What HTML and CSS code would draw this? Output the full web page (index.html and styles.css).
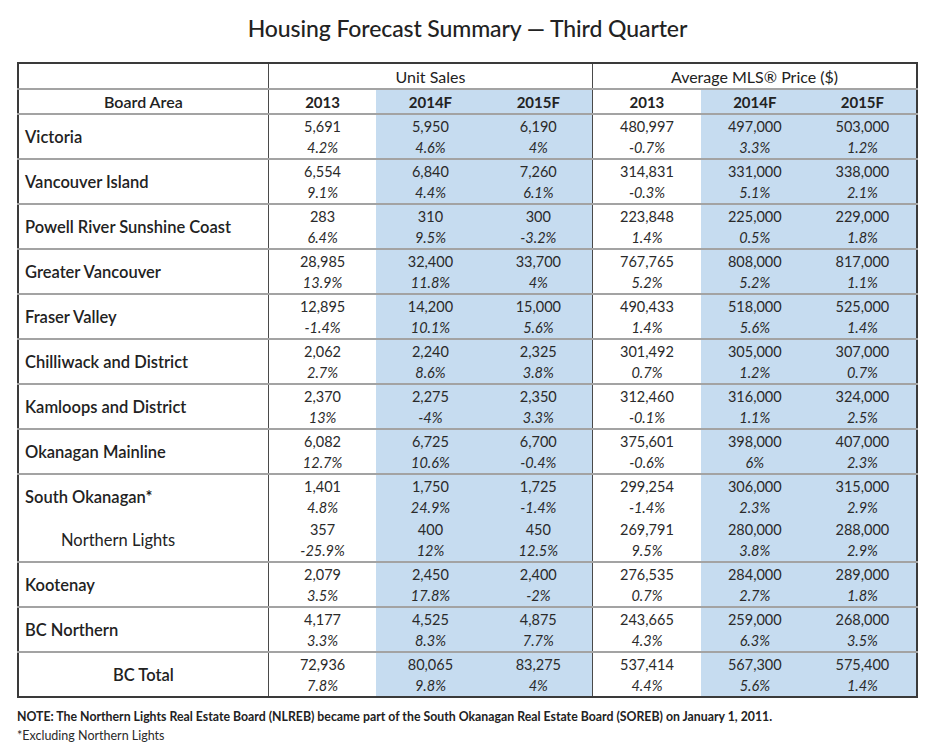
FILE: index.html
```html
<!DOCTYPE html>
<html lang="en">
<head>
<meta charset="utf-8">
<title>Housing Forecast Summary — Third Quarter</title>
<link rel="stylesheet" href="styles.css">
</head>
<body>
<div class="page">
  <h1 class="title">Housing Forecast Summary — Third Quarter</h1>
  <table class="forecast">
    <colgroup>
      <col class="c-area"><col class="c-num"><col class="c-num"><col class="c-num"><col class="c-num"><col class="c-num"><col class="c-num">
    </colgroup>
    <thead>
      <tr class="group-row">
        <th></th>
        <th colspan="3" class="sep">Unit Sales</th>
        <th colspan="3" class="sep">Average MLS® Price ($)</th>
      </tr>
      <tr class="year-row">
        <th class="area-head">Board Area</th>
        <th class="sep">2013</th>
        <th class="blue">2014F</th>
        <th class="blue">2015F</th>
        <th class="sep">2013</th>
        <th class="blue">2014F</th>
        <th class="blue">2015F</th>
      </tr>
    </thead>
    <tbody>
      <tr><td class="area">Victoria</td>
        <td class="sep"><span class="v">5,691</span><span class="p">4.2%</span></td>
        <td class="blue"><span class="v">5,950</span><span class="p">4.6%</span></td>
        <td class="blue"><span class="v">6,190</span><span class="p">4%</span></td>
        <td class="sep"><span class="v">480,997</span><span class="p">-0.7%</span></td>
        <td class="blue"><span class="v">497,000</span><span class="p">3.3%</span></td>
        <td class="blue"><span class="v">503,000</span><span class="p">1.2%</span></td></tr>
      <tr><td class="area">Vancouver Island</td>
        <td class="sep"><span class="v">6,554</span><span class="p">9.1%</span></td>
        <td class="blue"><span class="v">6,840</span><span class="p">4.4%</span></td>
        <td class="blue"><span class="v">7,260</span><span class="p">6.1%</span></td>
        <td class="sep"><span class="v">314,831</span><span class="p">-0.3%</span></td>
        <td class="blue"><span class="v">331,000</span><span class="p">5.1%</span></td>
        <td class="blue"><span class="v">338,000</span><span class="p">2.1%</span></td></tr>
      <tr><td class="area">Powell River Sunshine Coast</td>
        <td class="sep"><span class="v">283</span><span class="p">6.4%</span></td>
        <td class="blue"><span class="v">310</span><span class="p">9.5%</span></td>
        <td class="blue"><span class="v">300</span><span class="p">-3.2%</span></td>
        <td class="sep"><span class="v">223,848</span><span class="p">1.4%</span></td>
        <td class="blue"><span class="v">225,000</span><span class="p">0.5%</span></td>
        <td class="blue"><span class="v">229,000</span><span class="p">1.8%</span></td></tr>
      <tr><td class="area">Greater Vancouver</td>
        <td class="sep"><span class="v">28,985</span><span class="p">13.9%</span></td>
        <td class="blue"><span class="v">32,400</span><span class="p">11.8%</span></td>
        <td class="blue"><span class="v">33,700</span><span class="p">4%</span></td>
        <td class="sep"><span class="v">767,765</span><span class="p">5.2%</span></td>
        <td class="blue"><span class="v">808,000</span><span class="p">5.2%</span></td>
        <td class="blue"><span class="v">817,000</span><span class="p">1.1%</span></td></tr>
      <tr><td class="area">Fraser Valley</td>
        <td class="sep"><span class="v">12,895</span><span class="p">-1.4%</span></td>
        <td class="blue"><span class="v">14,200</span><span class="p">10.1%</span></td>
        <td class="blue"><span class="v">15,000</span><span class="p">5.6%</span></td>
        <td class="sep"><span class="v">490,433</span><span class="p">1.4%</span></td>
        <td class="blue"><span class="v">518,000</span><span class="p">5.6%</span></td>
        <td class="blue"><span class="v">525,000</span><span class="p">1.4%</span></td></tr>
      <tr><td class="area">Chilliwack and District</td>
        <td class="sep"><span class="v">2,062</span><span class="p">2.7%</span></td>
        <td class="blue"><span class="v">2,240</span><span class="p">8.6%</span></td>
        <td class="blue"><span class="v">2,325</span><span class="p">3.8%</span></td>
        <td class="sep"><span class="v">301,492</span><span class="p">0.7%</span></td>
        <td class="blue"><span class="v">305,000</span><span class="p">1.2%</span></td>
        <td class="blue"><span class="v">307,000</span><span class="p">0.7%</span></td></tr>
      <tr><td class="area">Kamloops and District</td>
        <td class="sep"><span class="v">2,370</span><span class="p">13%</span></td>
        <td class="blue"><span class="v">2,275</span><span class="p">-4%</span></td>
        <td class="blue"><span class="v">2,350</span><span class="p">3.3%</span></td>
        <td class="sep"><span class="v">312,460</span><span class="p">-0.1%</span></td>
        <td class="blue"><span class="v">316,000</span><span class="p">1.1%</span></td>
        <td class="blue"><span class="v">324,000</span><span class="p">2.5%</span></td></tr>
      <tr><td class="area">Okanagan Mainline</td>
        <td class="sep"><span class="v">6,082</span><span class="p">12.7%</span></td>
        <td class="blue"><span class="v">6,725</span><span class="p">10.6%</span></td>
        <td class="blue"><span class="v">6,700</span><span class="p">-0.4%</span></td>
        <td class="sep"><span class="v">375,601</span><span class="p">-0.6%</span></td>
        <td class="blue"><span class="v">398,000</span><span class="p">6%</span></td>
        <td class="blue"><span class="v">407,000</span><span class="p">2.3%</span></td></tr>
      <tr><td class="area">South Okanagan*</td>
        <td class="sep"><span class="v">1,401</span><span class="p">4.8%</span></td>
        <td class="blue"><span class="v">1,750</span><span class="p">24.9%</span></td>
        <td class="blue"><span class="v">1,725</span><span class="p">-1.4%</span></td>
        <td class="sep"><span class="v">299,254</span><span class="p">-1.4%</span></td>
        <td class="blue"><span class="v">306,000</span><span class="p">2.3%</span></td>
        <td class="blue"><span class="v">315,000</span><span class="p">2.9%</span></td></tr>
      <tr class="sub"><td class="area area-sub">Northern Lights</td>
        <td class="sep"><span class="v">357</span><span class="p">-25.9%</span></td>
        <td class="blue"><span class="v">400</span><span class="p">12%</span></td>
        <td class="blue"><span class="v">450</span><span class="p">12.5%</span></td>
        <td class="sep"><span class="v">269,791</span><span class="p">9.5%</span></td>
        <td class="blue"><span class="v">280,000</span><span class="p">3.8%</span></td>
        <td class="blue"><span class="v">288,000</span><span class="p">2.9%</span></td></tr>
      <tr><td class="area">Kootenay</td>
        <td class="sep"><span class="v">2,079</span><span class="p">3.5%</span></td>
        <td class="blue"><span class="v">2,450</span><span class="p">17.8%</span></td>
        <td class="blue"><span class="v">2,400</span><span class="p">-2%</span></td>
        <td class="sep"><span class="v">276,535</span><span class="p">0.7%</span></td>
        <td class="blue"><span class="v">284,000</span><span class="p">2.7%</span></td>
        <td class="blue"><span class="v">289,000</span><span class="p">1.8%</span></td></tr>
      <tr><td class="area">BC Northern</td>
        <td class="sep"><span class="v">4,177</span><span class="p">3.3%</span></td>
        <td class="blue"><span class="v">4,525</span><span class="p">8.3%</span></td>
        <td class="blue"><span class="v">4,875</span><span class="p">7.7%</span></td>
        <td class="sep"><span class="v">243,665</span><span class="p">4.3%</span></td>
        <td class="blue"><span class="v">259,000</span><span class="p">6.3%</span></td>
        <td class="blue"><span class="v">268,000</span><span class="p">3.5%</span></td></tr>
      <tr class="total"><td class="area area-total">BC Total</td>
        <td class="sep"><span class="v">72,936</span><span class="p">7.8%</span></td>
        <td class="blue"><span class="v">80,065</span><span class="p">9.8%</span></td>
        <td class="blue"><span class="v">83,275</span><span class="p">4%</span></td>
        <td class="sep"><span class="v">537,414</span><span class="p">4.4%</span></td>
        <td class="blue"><span class="v">567,300</span><span class="p">5.6%</span></td>
        <td class="blue"><span class="v">575,400</span><span class="p">1.4%</span></td></tr>
    </tbody>
  </table>
  <p class="note"><b>NOTE: The Northern Lights Real Estate Board (NLREB) became part of the South Okanagan Real Estate Board (SOREB) on January 1, 2011.</b></p>
  <p class="foot">*Excluding Northern Lights</p>
</div>
</body>
</html>
```

FILE: styles.css
```css
html, body {
  margin: 0;
  padding: 0;
  background: #ffffff;
}
body {
  font-family: Lato, "Open Sans", sans-serif;
  color: #2a2a2a;
}
.page {
  padding-left: 17px;
  width: 901px;
}
.title {
  margin: 0;
  height: 62px;
  line-height: 56px;
  font-size: 23px;
  font-weight: 500;
  letter-spacing: -0.1px;
  text-align: center;
  color: #222222;
}
.forecast {
  width: 901px;
  table-layout: fixed;
  border-collapse: collapse;
  border: 2px solid #3a3a3a;
}
.c-area { width: 250px; }
.c-num { width: 108px; }
.forecast th,
.forecast td {
  padding: 0;
  text-align: center;
  vertical-align: middle;
  border-top: 2px solid #a3a3a3;
}
.forecast .sep {
  border-left: 1px solid #4a4a4a;
}
.forecast .blue {
  background: #c6dcf0;
}
.group-row th {
  height: 24px;
  font-size: 16px;
  font-weight: 400;
  border-top: none;
  color: #222222;
}
.year-row th {
  height: 23px;
  font-size: 15px;
  font-weight: 700;
  color: #222222;
}
.year-row th.area-head {
  font-size: 16px;
  font-weight: 600;
}
.forecast td {
  height: 43px;
  font-size: 14.5px;
}
.forecast .v,
.forecast .p {
  display: block;
  line-height: 21px;
}
.forecast .p {
  font-style: italic;
}
.forecast td.area {
  text-align: left;
  padding-left: 6px;
  font-size: 16.5px;
  font-weight: 600;
  color: #222222;
}
.forecast tr.sub td {
  border-top: none;
}
.forecast td.area-sub {
  padding-left: 42px;
  font-weight: 400;
}
.forecast td.area-total {
  text-align: center;
  padding-left: 0;
}
.note {
  margin: 11px 0 0;
  font-size: 12.3px;
  line-height: 16px;
  color: #222222;
}
.foot {
  margin: 3px 0 0;
  font-size: 12.5px;
  line-height: 16px;
  color: #2a2a2a;
}
```
